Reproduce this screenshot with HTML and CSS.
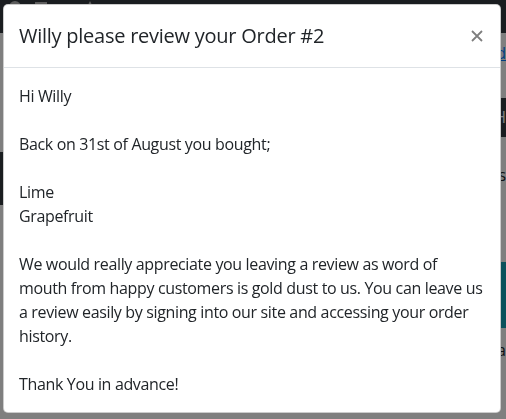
FILE: index.html
```html
<!DOCTYPE html>
<html>
<head>
    <title>Order Review</title>
    <meta charset="UTF-8">
    <meta name="viewport" content="width=device-width, initial-scale=1.0">
    <link rel="stylesheet" href="styles.css">
</head>
<body>
    <nav class="navbar">
        <svg class="nav-icon" width="14" height="14" viewBox="0 0 14 14"><circle cx="7" cy="7" r="6" fill="#bbb"/></svg>
        <svg class="nav-icon" width="14" height="14" viewBox="0 0 14 14"><path d="M1 3h12M1 7h12M1 11h12" stroke="#bbb" stroke-width="2"/></svg>
        <svg class="nav-icon" width="10" height="14" viewBox="0 0 10 14"><path d="M1 4l4 5 4-5z" fill="#bbb"/></svg>
        <svg class="nav-icon" width="16" height="14" viewBox="0 0 16 14"><path d="M8 1l2 4 4 1-3 3 1 4-4-2-4 2 1-4-3-3 4-1z" fill="#bbb"/></svg>
        <svg class="nav-icon" width="10" height="14" viewBox="0 0 10 14"><path d="M1 4l4 5 4-5z" fill="#bbb"/></svg>
    </nav>

    <div class="layout">
        <aside class="sidebar">
            <div class="side-block"></div>
        </aside>
        <main class="content">
            <div class="link-row"><a href="#">d</a></div>
            <div class="card-header">H</div>
            <div class="text-row">Items</div>
            <div class="teal-band"></div>
            <div class="text-row small">Data</div>
        </main>
    </div>

    <div class="modal-backdrop"></div>

    <div class="modal">
        <div class="modal-content">
            <div class="modal-header">
                <h5 class="modal-title">Willy please review your Order #2</h5>
                <button type="button" class="close" aria-label="Close">
                    <svg width="12" height="12" viewBox="0 0 12 12"><path d="M1 1l10 10M11 1L1 11" stroke="#000" stroke-width="1.8"/></svg>
                </button>
            </div>
            <div class="modal-body">
                <p>Hi Willy</p>
                <p>Back on 31st of August you bought;</p>
                <p>Lime<br>Grapefruit</p>
                <p>We would really appreciate you leaving a review as word of<br>mouth from happy customers is gold dust to us. You can leave us<br>a review easily by signing into our site and accessing your order<br>history.</p>
                <p>Thank You in advance!</p>
            </div>
        </div>
    </div>
</body>
</html>
```

FILE: styles.css
```css
body {
    margin: 0;
    font-family: "Open Sans", "Noto Sans", sans-serif;
    font-size: 16px;
    line-height: 1.5;
    color: #212529;
    background-color: #fff;
    height: 419px;
    overflow: hidden;
}
.navbar {
    height: 33px;
    background-color: #343a40;
    display: flex;
    align-items: flex-start;
    gap: 12px;
    padding: 0 8px;
    box-sizing: border-box;
}
.layout {
    display: grid;
    grid-template-columns: 40px 1fr;
}
.side-block {
    margin-top: 119px;
    height: 53px;
    background-color: #343a40;
}
.content {
    text-align: right;
}
.link-row {
    height: 65px;
    padding-top: 8px;
    box-sizing: border-box;
}
.link-row a {
    color: #007bff;
}
.card-header {
    height: 39px;
    background-color: #343a40;
    color: #fff;
    line-height: 39px;
}
.text-row {
    height: 125px;
    padding-top: 26px;
    box-sizing: border-box;
}
.teal-band {
    height: 66px;
    background-color: #17a2b8;
}
.text-row.small {
    height: 60px;
    padding-top: 10px;
}
.modal-backdrop {
    position: fixed;
    top: 0;
    left: 0;
    right: 0;
    bottom: 0;
    background-color: rgba(0, 0, 0, 0.5);
}
.modal {
    position: fixed;
    top: 4px;
    left: 3px;
    width: 498px;
}
.modal-content {
    background-color: #fff;
    border: 1px solid rgba(0, 0, 0, 0.2);
    border-radius: 5px;
}
.modal-header {
    display: flex;
    align-items: flex-start;
    justify-content: space-between;
    padding: 16px 16px 16px 15px;
    border-bottom: 1px solid #dee2e6;
}
.modal-title {
    margin: 0;
    font-size: 20px;
    font-weight: 500;
    line-height: 1.5;
    letter-spacing: -0.25px;
}
.close {
    display: flex;
    padding: 25px 17px 0 0;
    margin: -16px -16px -16px auto;
    width: 45px;
    height: 62px;
    box-sizing: border-box;
    justify-content: flex-end;
    background: none;
    border: none;
    opacity: 0.5;
    cursor: pointer;
}
.modal-body {
    padding: 16px 15px;
    letter-spacing: -0.35px;
}
.modal-body p {
    margin: 0 0 24px;
}
.modal-body p:last-child {
    margin-bottom: 0;
}
```
